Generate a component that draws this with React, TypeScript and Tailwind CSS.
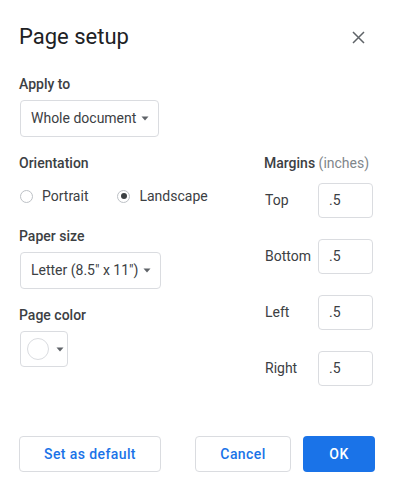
import React from "react";

const font = { fontFamily: "Roboto, Arial, sans-serif" };

const Caret = () => (
  <svg width="10" height="5" viewBox="0 0 10 5" className="shrink-0">
    <path d="M1.5 0.5h7L5 4.5z" fill="#5f6368" />
  </svg>
);

const Select = ({ value, width }: { value: string; width: string }) => (
  <div
    className={`flex items-center justify-between h-[37px] ${width} pl-[10px] pr-[8px] border border-[#dadce0] rounded-[4px] text-[14px] text-[#3c4043]`}
  >
    <span>{value}</span>
    <Caret />
  </div>
);

const Label = ({ children }: { children: React.ReactNode }) => (
  <div className="text-[14px] leading-5 font-medium text-[#3c4043]">{children}</div>
);

const Radio = ({ checked, label }: { checked?: boolean; label: string }) => (
  <label className="flex items-center gap-[9px] text-[14px] leading-5 text-[#3c4043]">
    <span className="flex items-center justify-center w-[13px] h-[13px] rounded-full border border-[#bdc1c6]">
      {checked && <span className="w-[6px] h-[6px] rounded-full bg-[#3c4043]" />}
    </span>
    {label}
  </label>
);

const MarginRow = ({ label }: { label: string }) => (
  <div className="flex items-center">
    <span className="w-[54px] pl-[1px] text-[14px] text-[#3c4043]">{label}</span>
    <div className="flex items-center w-[55px] h-[35px] pl-[10px] border border-[#dadce0] rounded-[4px] text-[14px] text-[#3c4043]">
      .5
    </div>
  </div>
);

export default function App() {
  return (
    <div style={font} className="w-[393px] h-[490px] bg-white pl-[19px] pr-[18px] pt-[23px] relative">
      <div className="flex items-center justify-between">
        <h1 className="text-[22px] leading-7 text-[#202124]">Page setup</h1>
        <button className="mr-[5px] w-6 h-6 flex items-center justify-center" aria-label="Close">
          <svg width="13" height="13" viewBox="0 0 13 13">
            <path d="M1 1l11 11M12 1L1 12" stroke="#5f6368" strokeWidth="1.5" />
          </svg>
        </button>
      </div>

      <div className="mt-[23px]">
        <Label>Apply to</Label>
        <div className="mt-[6px] ml-px">
          <Select value="Whole document" width="w-[139px]" />
        </div>
      </div>

      <div className="flex mt-[16px]">
        <div className="flex-1">
          <Label>Orientation</Label>
          <div className="flex items-center gap-[29px] mt-[13px] ml-px">
            <Radio label="Portrait" />
            <Radio checked label="Landscape" />
          </div>

          <div className="mt-[20px]">
            <Label>Paper size</Label>
            <div className="mt-[6px] ml-px">
              <Select value={'Letter (8.5" x 11")'} width="w-[141px]" />
            </div>
          </div>

          <div className="mt-[16px]">
            <Label>Page color</Label>
            <div className="mt-[6px] ml-px flex items-center gap-[6px] w-[48px] h-[36px] pl-[6px] border border-[#dadce0] rounded-[4px]">
              <span className="w-[22px] h-[22px] rounded-full border border-[#dadce0] bg-white" />
              <Caret />
            </div>
          </div>
        </div>

        <div className="w-[109px] mr-[2px]">
          <div className="text-[14px] leading-5 font-medium text-[#3c4043]">
            Margins <span className="font-normal text-[#80868b]">(inches)</span>
          </div>
          <div className="mt-[10px] flex flex-col gap-[21px]">
            <MarginRow label="Top" />
            <MarginRow label="Bottom" />
            <MarginRow label="Left" />
            <MarginRow label="Right" />
          </div>
        </div>
      </div>

      <div className="absolute left-[19px] right-[18px] top-[436px] flex items-center text-[14px] font-medium tracking-[0.4px]">
        <button className="w-[142px] h-[36px] border border-[#dadce0] rounded-[4px] text-[#1a73e8]">
          Set as default
        </button>
        <div className="flex-1" />
        <button className="w-[96px] h-[36px] border border-[#dadce0] rounded-[4px] text-[#1a73e8]">
          Cancel
        </button>
        <button className="ml-[12px] w-[72px] h-[36px] rounded-[4px] bg-[#1a73e8] text-white">
          OK
        </button>
      </div>
    </div>
  );
}
